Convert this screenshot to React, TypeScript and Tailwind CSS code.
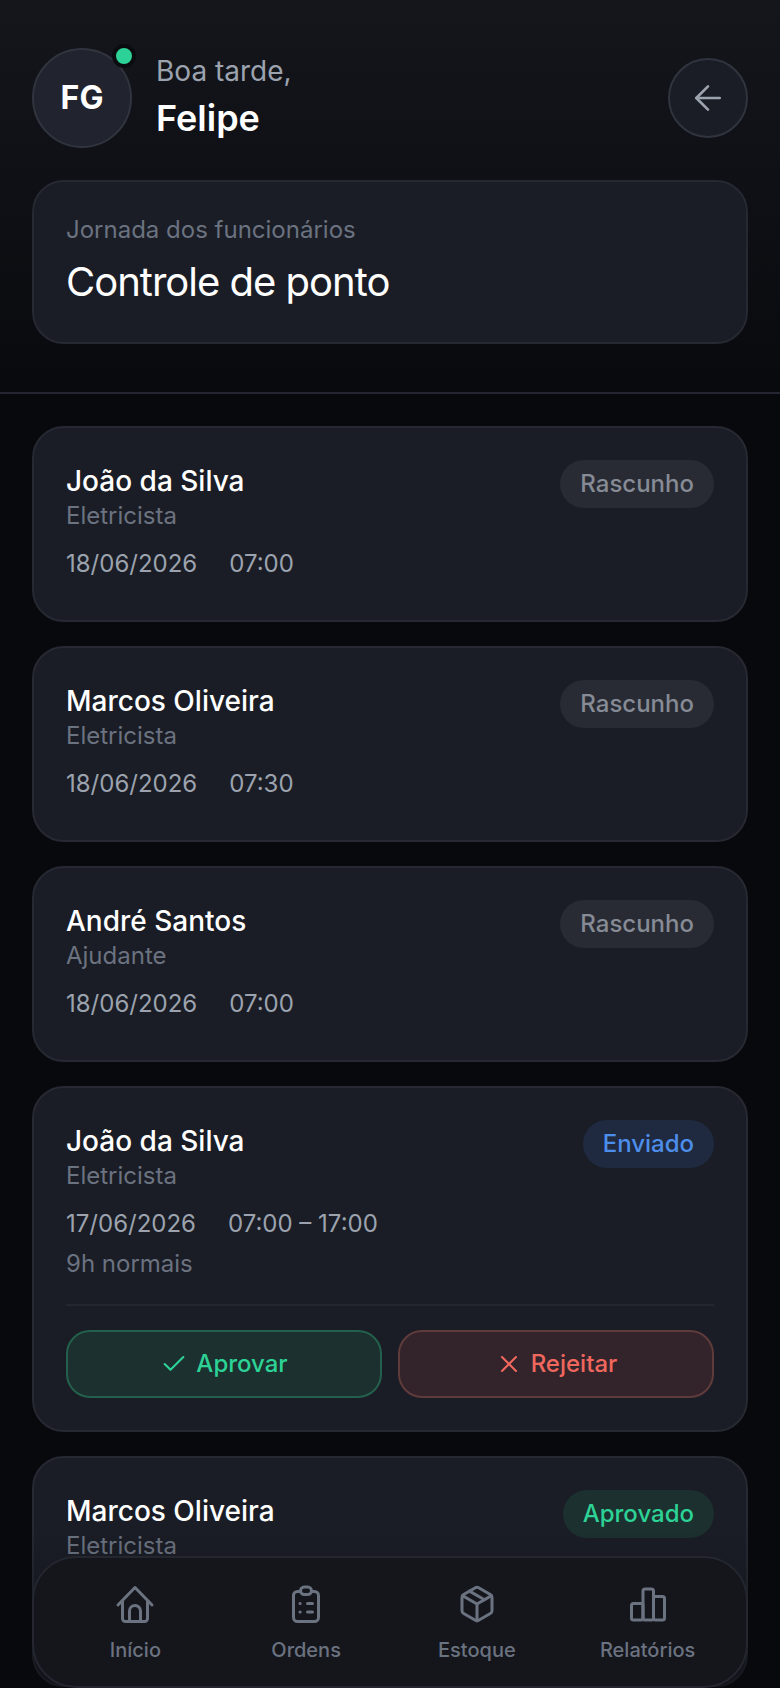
import React from "react";

function HomeIcon() {
  return (
    <svg width="40" height="40" viewBox="0 0 40 40" fill="none" stroke="currentColor" strokeWidth="3" strokeLinecap="round" strokeLinejoin="round">
      <path d="M3 21 20 3.5 37 21" />
      <path d="M7.5 17v17.5a3 3 0 0 0 3 3h19a3 3 0 0 0 3-3V17" />
      <path d="M14.5 37V27a5.5 5.5 0 0 1 11 0v10" />
    </svg>
  );
}

function ClipboardIcon() {
  return (
    <svg width="40" height="40" viewBox="0 0 40 40" fill="none" stroke="currentColor" strokeWidth="3" strokeLinecap="round" strokeLinejoin="round">
      <rect x="7.5" y="7.5" width="25" height="30" rx="4" />
      <rect x="14.5" y="3" width="11" height="7.5" rx="3.75" fill="#14161c" />
      <path d="M14 19.5h.2M14 28h.2M21.5 19.5h5M21.5 28h5" />
    </svg>
  );
}

function BoxIcon() {
  return (
    <svg width="40" height="40" viewBox="0 0 24 24" fill="none" stroke="currentColor" strokeWidth="1.8" strokeLinecap="round" strokeLinejoin="round">
      <path d="M11 21.73a2 2 0 0 0 2 0l7-4A2 2 0 0 0 21 16V8a2 2 0 0 0-1-1.73l-7-4a2 2 0 0 0-2 0l-7 4A2 2 0 0 0 3 8v8a2 2 0 0 0 1 1.73z" />
      <path d="M12 22V12" />
      <polyline points="3.29 7 12 12 20.71 7" />
      <path d="m7.5 4.27 9 5.15" />
    </svg>
  );
}

function ChartIcon() {
  return (
    <svg width="40" height="40" viewBox="0 0 40 40" fill="none" stroke="currentColor" strokeWidth="3" strokeLinecap="round" strokeLinejoin="round">
      <rect x="3.5" y="19.5" width="11.5" height="16.5" rx="2" />
      <rect x="15" y="5" width="10.5" height="31" rx="2" />
      <rect x="25.5" y="12.5" width="11" height="23.5" rx="2" />
    </svg>
  );
}

function Badge({ label, cls }: { label: string; cls: string }) {
  return <span className={"flex h-12 shrink-0 items-center rounded-full px-5 text-[24px] font-medium " + cls}>{label}</span>;
}

const RASCUNHO = "bg-[#282b33] text-[#868b96]";

function Card({ name, role, date, time, badge, pb, children }: { name: string; role: string; date: string; time: string; badge: React.ReactNode; pb: string; children?: React.ReactNode }) {
  return (
    <section className={"shrink-0 rounded-[32px] border-2 border-[#262932] bg-[#1a1d25] px-8 pt-8 " + pb}>
      <div className="flex items-start justify-between">
        <div>
          <div className="text-[28px] leading-[42px] font-medium text-white">{name}</div>
          <div className="text-[24px] leading-[28px] text-[#6b7280]">{role}</div>
        </div>
        {badge}
      </div>
      <div className="mt-[18px] flex gap-8 text-[24px] leading-[32px] text-[#9ca3af]">
        <span>{date}</span>
        <span>{time}</span>
      </div>
      {children}
    </section>
  );
}

function Hours() {
  return <div className="mt-2 text-[24px] leading-[32px] text-[#6b7280]">9h normais</div>;
}

export default function App() {
  return (
    <div className="relative h-[1688px] w-[780px] overflow-hidden bg-[#08090d] font-['Inter',sans-serif]">
      <header className="border-b-2 border-[#242731] bg-gradient-to-b from-[#14161c] to-[#090a0e] px-8 pt-12 pb-12">
        <div className="flex items-center justify-between">
          <div className="flex items-center gap-6">
            <div className="relative flex h-[100px] w-[100px] items-center justify-center rounded-full border-2 border-[#30343e] bg-[#21242e] text-[32px] font-bold text-white">
              FG
              <span className="absolute top-[-6px] right-[-6px] h-6 w-6 rounded-full border-4 border-[#0b0c10] bg-[#2dd296]" />
            </div>
            <div className="pb-[5px]">
              <div className="text-[28px] leading-[40px] text-[#9ca3af]">Boa tarde,</div>
              <div className="mt-[5px] text-[36px] leading-[44px] font-semibold text-white">Felipe</div>
            </div>
          </div>
          <button className="flex h-20 w-20 items-center justify-center rounded-full border-2 border-[#30343e] bg-[#1a1d25] text-[#9ca3af]">
            <svg width="40" height="40" viewBox="0 0 24 24" fill="none" stroke="currentColor" strokeWidth="1.6" strokeLinecap="round" strokeLinejoin="round">
              <path d="m12 19-7-7 7-7" />
              <path d="M19 12H5" />
            </svg>
          </button>
        </div>
        <div className="mt-8 rounded-[32px] border-2 border-[#262932] bg-[#1a1d25] px-8 pt-8 pb-[34px]">
          <div className="text-[24px] leading-[32px] text-[#6b7280]">Jornada dos funcionários</div>
          <div className="mt-[10px] text-[40px] leading-[52px] font-normal tracking-[-1px] text-white">Controle de ponto</div>
        </div>
      </header>

      <main className="flex flex-col gap-6 px-8 pt-8">
        <Card pb="pb-[40px]" name="João da Silva" role="Eletricista" date="18/06/2026" time="07:00" badge={<Badge label="Rascunho" cls={RASCUNHO} />} />
        <Card pb="pb-[40px]" name="Marcos Oliveira" role="Eletricista" date="18/06/2026" time="07:30" badge={<Badge label="Rascunho" cls={RASCUNHO} />} />
        <Card pb="pb-[40px]" name="André Santos" role="Ajudante" date="18/06/2026" time="07:00" badge={<Badge label="Rascunho" cls={RASCUNHO} />} />
        <Card pb="pb-8" name="João da Silva" role="Eletricista" date="17/06/2026" time="07:00 – 17:00" badge={<Badge label="Enviado" cls="bg-[#1f2a40] text-[#4d8eea]" />}>
          <Hours />
          <div className="mt-6 flex gap-4 border-t-2 border-[#24272f] pt-6">
            <button className="flex h-[68px] flex-1 items-center justify-center gap-2 rounded-[24px] border-2 border-[#24604c] bg-[#1c302f] text-[24px] font-medium text-[#2dd296]">
              <svg width="28" height="28" viewBox="0 0 24 24" fill="none" stroke="currentColor" strokeWidth="1.8" strokeLinecap="round" strokeLinejoin="round"><path d="M20 6 9 17l-5-5" /></svg>
              Aprovar
            </button>
            <button className="flex h-[68px] flex-1 items-center justify-center gap-2 rounded-[24px] border-2 border-[#5f3c3b] bg-[#33242b] text-[24px] font-medium text-[#f0675e]">
              <svg width="28" height="28" viewBox="0 0 24 24" fill="none" stroke="currentColor" strokeWidth="1.8" strokeLinecap="round" strokeLinejoin="round"><path d="M18 6 6 18" /><path d="m6 6 12 12" /></svg>
              Rejeitar
            </button>
          </div>
        </Card>
        <Card pb="pb-[35px]" name="Marcos Oliveira" role="Eletricista" date="17/06/2026" time="07:00 – 17:00" badge={<Badge label="Aprovado" cls="bg-[#1c302f] text-[#2dd296]" />}>
          <Hours />
        </Card>
      </main>

      <div className="pointer-events-none absolute inset-x-0 bottom-0 h-[160px] bg-gradient-to-t from-[#08090d]/50 to-transparent" />

      <nav className="absolute bottom-0 left-8 grid h-[132px] w-[716px] grid-cols-4 rounded-[44px] border-2 border-[#24272f] bg-[#14161c] pt-[26px] pr-[13px] pl-4 text-[#6b7280]">
        {[
          ["Início", <HomeIcon key="h" />],
          ["Ordens", <ClipboardIcon key="c" />],
          ["Estoque", <BoxIcon key="b" />],
          ["Relatórios", <ChartIcon key="r" />],
        ].map(([label, icon]) => (
          <div key={label as string} className="flex flex-col items-center gap-3">
            {icon}
            <span className="text-[20px] leading-[28px] font-medium">{label}</span>
          </div>
        ))}
      </nav>
    </div>
  );
}
